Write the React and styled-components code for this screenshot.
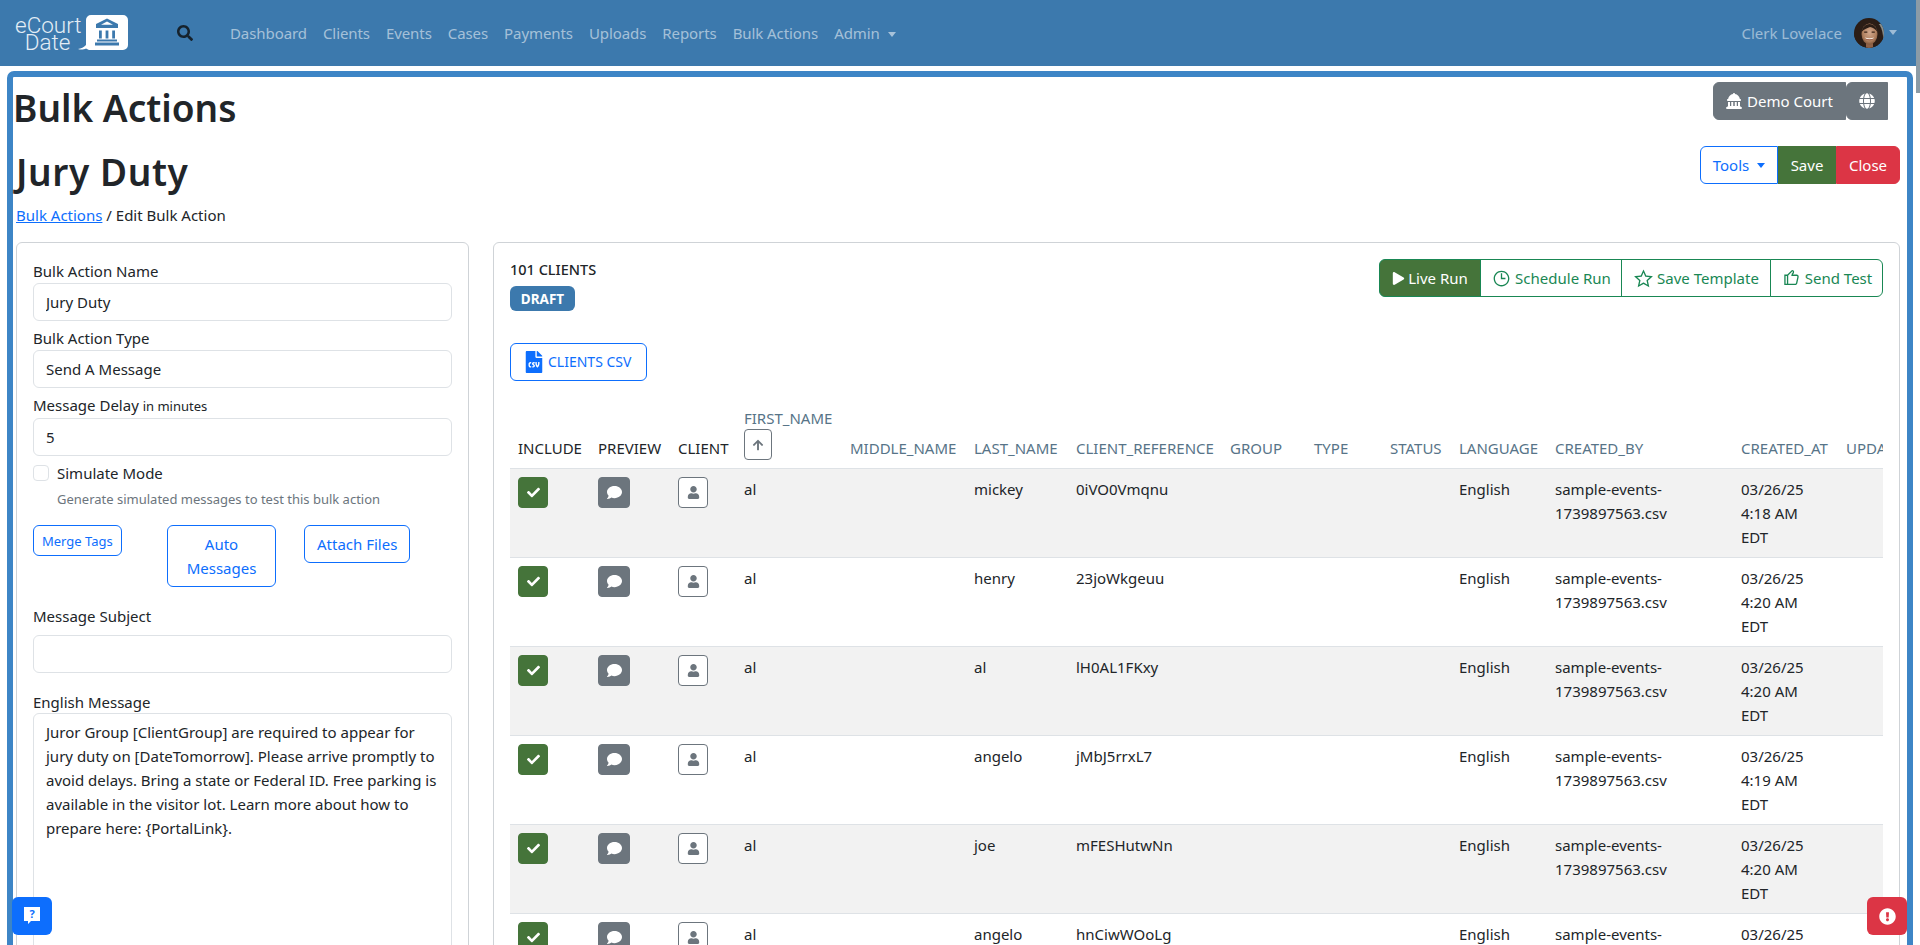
import React from "react";
import styled, { createGlobalStyle, css } from "styled-components";
import {
  FaSearch,
  FaGlobe,
  FaPlay,
  FaFileCsv,
  FaCheck,
  FaComment,
  FaUser,
  FaArrowUp,
  FaExclamationCircle
} from "react-icons/fa";
import { FaLandmarkDome } from "react-icons/fa6";
import { LiaClock, LiaStar, LiaThumbsUp } from "react-icons/lia";

const navBlue = "#3c79ad";
const frameBlue = "#3d85c6";
const green = "#45743a";
const linkBlue = "#0d6efd";
const outlineGreen = "#198754";
const red = "#dc3545";
const gray = "#6c757d";

const GlobalStyle = createGlobalStyle`
  html, body {
    margin: 0;
    height: 100%;
    overflow: hidden;
    background: #fff;
  }
  body {
    font-family: "Noto Sans", "Open Sans", sans-serif;
    font-size: 15px;
    line-height: 24px;
    color: #212529;
  }
  * {
    box-sizing: border-box;
  }
`;

const Viewport = styled.div`
  height: 100vh;
  overflow: hidden;
  padding-right: 4px;
  background: #fff;
`;

const ScrollThumb = styled.div`
  position: fixed;
  top: 0;
  right: 0;
  width: 4px;
  height: 93px;
  background: #8b9ba6;
`;

const Navbar = styled.nav`
  height: 66px;
  background: ${navBlue};
  display: flex;
  align-items: center;
  padding: 0 19px 0 15px;
`;

const LogoLink = styled.a`
  display: flex;
  align-items: center;
`;

const LogoText = styled.div`
  font-family: Roboto, "Liberation Sans", Arial, sans-serif;
  font-weight: 300;
  font-size: 22.5px;
  line-height: 17px;
  color: #e3edf5;
  text-align: center;
  width: 65px;
  margin-top: 1px;
`;

const LogoMark = styled.svg`
  width: 50px;
  height: 36px;
  margin-left: -2px;
`;

const SearchIcon = styled(FaSearch)`
  width: 16px;
  height: 16px;
  color: #16222c;
  margin-left: 49px;
  margin-right: 29px;
`;

const caret = css`
  &::after {
    content: "";
    display: inline-block;
    margin-left: 8px;
    vertical-align: 2px;
    border-top: 5px solid currentColor;
    border-left: 4px solid transparent;
    border-right: 4px solid transparent;
  }
`;

const NavLink = styled.a`
  padding: 0 8px;
  color: rgba(255, 255, 255, 0.55);
  white-space: nowrap;
  letter-spacing: -0.08px;
  ${(p) => p.$caret && caret}
`;

const UserArea = styled.div`
  margin-left: auto;
  display: flex;
  align-items: center;
  color: rgba(255, 255, 255, 0.5);
  ${caret}
  &::after {
    margin-left: 5px;
    margin-bottom: 2px;
  }
`;

const Avatar = styled.svg`
  width: 30px;
  height: 30px;
  margin-left: 12px;
  border-radius: 50%;
`;

const Frame = styled.main`
  margin: 5px 3px 0 7px;
  border: 6px solid ${frameBlue};
  border-radius: 7px;
  padding: 5px 7px 0 0;
`;

const TitleRow = styled.div`
  display: flex;
  justify-content: space-between;
  align-items: flex-start;
  margin-top: ${(p) => p.$top || 0}px;
`;

const PageTitle = styled.h1`
  margin: 2px 0 0 ${(p) => p.$left || 0}px;
  font-size: 37px;
  line-height: 48px;
  font-weight: 600;
  letter-spacing: ${(p) => p.$spread || 0}px;
`;

const Breadcrumb = styled.div`
  margin: 7px 0 0 3px;
`;

const CrumbLink = styled.a`
  color: ${linkBlue};
  text-decoration: underline;
`;

const Group = styled.div`
  display: inline-flex;
  align-items: flex-start;
  margin-right: ${(p) => p.$right || 0}px;
`;

const Button = styled.button`
  font: inherit;
  height: 38px;
  padding: 0 12px;
  border: 1px solid ${linkBlue};
  background: #fff;
  color: ${linkBlue};
  border-radius: 6px;
  white-space: nowrap;
  display: inline-flex;
  align-items: center;
  justify-content: center;

  svg {
    flex: none;
  }
`;

const GroupButton = styled(Button)`
  border-radius: 0;
  &:first-child {
    border-radius: 6px 0 0 6px;
  }
  &:last-child {
    border-radius: 0 6px 6px 0;
  }
`;

const CourtButton = styled(GroupButton)`
  background: ${gray};
  border-color: ${gray};
  color: #fff;
  gap: 5px;
  width: 133px;
  &:last-child {
    width: 42px;
    border-radius: 6px 0 0 6px;
  }
`;

const ToolsButton = styled(GroupButton)`
  width: 78px;
  padding: 0;
  ${caret}
`;

const SolidButton = styled(GroupButton)`
  background: ${(p) => p.$bg};
  border-color: ${(p) => p.$bg};
  color: #fff;
  padding: 0;
  width: ${(p) => p.$w}px;
`;

const RunButton = styled(GroupButton)`
  border-color: ${outlineGreen};
  color: ${outlineGreen};
  gap: 3px;
  padding: 0;
  margin-left: -1px;
  width: ${(p) => p.$w}px;

  &:first-child {
    margin-left: 0;
    background: ${green};
    color: #fff;
  }
`;

const Columns = styled.div`
  display: grid;
  grid-template-columns: 453px 1407px;
  gap: 24px;
  margin: 15px 0 0 3px;
`;

const Card = styled.section`
  border: 1px solid #cfd3d7;
  border-radius: 6px;
  padding: 16px;
  min-width: 0;
`;

const FieldLabel = styled.label`
  display: block;
  margin-top: ${(p) => p.$top || 0}px;
`;

const FieldHint = styled.small`
  font-size: 13px;
`;

const TextInput = styled.input`
  display: block;
  width: 100%;
  height: 38px;
  margin-top: ${(p) => p.$top || 0}px;
  padding: 6px 12px;
  font: inherit;
  color: #212529;
  background: #fff;
  border: 1px solid #dee2e6;
  border-radius: 6px;
  outline: none;
`;

const MessageBox = styled.textarea`
  display: block;
  width: 100%;
  height: 440px;
  margin-top: -1px;
  padding: 6px 12px;
  font: inherit;
  color: #212529;
  background: #fff;
  border: 1px solid #dee2e6;
  border-radius: 6px;
  outline: none;
  resize: none;
`;

const CheckRow = styled.label`
  display: flex;
  align-items: center;
  gap: 8px;
  margin-top: 5px;
`;

const CheckBox = styled.input`
  appearance: none;
  width: 16px;
  height: 16px;
  margin: 0;
  border: 1px solid #dee2e6;
  border-radius: 4px;
  background: #fff;
`;

const HelpText = styled.div`
  font-size: 13px;
  line-height: 21px;
  color: ${gray};
  margin: 4px 0 0 24px;
`;

const TagButtons = styled.div`
  display: grid;
  grid-template-columns: 134px 137px 1fr;
  align-items: start;
  justify-items: start;
  margin-top: 15px;
`;

const SmallButton = styled(Button)`
  height: 31px;
  padding: 0 8px;
  font-size: 13px;
`;

const WrapButton = styled(Button)`
  width: 109px;
  height: 62px;
  white-space: normal;
`;

const CardTop = styled.div`
  display: flex;
  justify-content: space-between;
  align-items: flex-start;
  height: 52px;
`;

const ClientCount = styled.div`
  font-size: 14.5px;
  line-height: 21px;
  font-weight: 500;
  text-transform: uppercase;
`;

const StatusBadge = styled.span`
  display: inline-flex;
  align-items: center;
  justify-content: center;
  width: 65px;
  height: 25px;
  margin-top: 6px;
  border-radius: 6px;
  background: ${navBlue};
  color: #fff;
  font-size: 13.5px;
  font-weight: 700;
`;

const CsvButton = styled(Button)`
  margin-top: 32px;
  width: 137px;
  padding: 0 0 0 12px;
  gap: 3px;
  justify-content: flex-start;
  font-size: 14px;
  text-transform: uppercase;
`;

const TableClip = styled.div`
  margin-top: 17px;
  overflow: hidden;
`;

const ClientTable = styled.table`
  width: 1500px;
  table-layout: fixed;
  border-collapse: collapse;
`;

const HeadCell = styled.th`
  padding: 8px;
  text-align: left;
  vertical-align: bottom;
  font-weight: 400;
  white-space: nowrap;
  color: ${(p) => (p.$plain ? "#212529" : "#577488")};
  border-bottom: 1px solid #dee2e6;
`;

const HeadStack = styled.span`
  display: block;
  margin-bottom: -1px;
`;

const SortButton = styled.button`
  display: flex;
  align-items: center;
  justify-content: center;
  width: 28px;
  height: 31px;
  padding: 0;
  border: 1px solid ${gray};
  border-radius: 4px;
  background: #fff;
  color: ${gray};
`;

const Row = styled.tr`
  &:nth-child(odd) {
    background: #f2f2f2;
  }
`;

const Cell = styled.td`
  padding: 8px;
  vertical-align: top;
  border-bottom: 1px solid #dee2e6;
`;

const TimeCell = styled(Cell)`
  padding-right: 20px;
`;

const RowButton = styled.button`
  display: flex;
  align-items: center;
  justify-content: center;
  width: ${(p) => p.$w}px;
  height: 31px;
  padding: 0;
  border-radius: 4px;
  border: 1px solid ${(p) => (p.$outline ? gray : p.$bg)};
  background: ${(p) => (p.$outline ? "#fff" : p.$bg)};
  color: ${(p) => (p.$outline ? gray : "#fff")};
`;

const FloatButton = styled.button`
  position: fixed;
  bottom: 10px;
  width: 40px;
  height: 38px;
  padding: 0;
  border: 0;
  border-radius: 6px;
  display: flex;
  align-items: center;
  justify-content: center;
  color: #fff;
  background: ${(p) => p.$bg};
  ${(p) => (p.$side === "left" ? "left: 12px;" : "right: 13px;")}
`;

const ColWidth = styled.col`
  width: ${(p) => p.$w}px;
`;

const columns = [
  { key: "INCLUDE", w: 80, plain: true },
  { key: "PREVIEW", w: 80, plain: true },
  { key: "CLIENT", w: 66, plain: true },
  { key: "FIRST_NAME", w: 106, sort: true },
  { key: "MIDDLE_NAME", w: 124 },
  { key: "LAST_NAME", w: 102 },
  { key: "CLIENT_REFERENCE", w: 154 },
  { key: "GROUP", w: 84 },
  { key: "TYPE", w: 76 },
  { key: "STATUS", w: 69 },
  { key: "LANGUAGE", w: 96 },
  { key: "CREATED_BY", w: 186 },
  { key: "CREATED_AT", w: 105 },
  { key: "UPDATED_AT", w: 172 }
];

const clients = [
  { last: "mickey", ref: "0iVO0Vmqnu", time: "4:18" },
  { last: "henry", ref: "23joWkgeuu", time: "4:20" },
  { last: "al", ref: "lH0AL1FKxy", time: "4:20" },
  { last: "angelo", ref: "jMbJ5rrxL7", time: "4:19" },
  { last: "joe", ref: "mFESHutwNn", time: "4:20" },
  { last: "angelo", ref: "hnCiwWOoLg", time: "4:20" }
];

const LogoIcon = () => (
  <LogoMark viewBox="0 0 50 36">
    <path
      d="M13 0h32a5 5 0 0 1 5 5v25a5 5 0 0 1-5 5H11l-3-1.500C6 34.500 3 35 0 34c3-.5 6-1.500 8-4V5a5 5 0 0 1 5-5z"
      fill="#fff"
    />
    <g fill={navBlue}>
      <path d="M29 3.500 40 9v4H18V9zM29 6.500 23 9.800h12z" fillRule="evenodd" />
      <rect x="21" y="15.500" width="2.800" height="8" />
      <rect x="27.600" y="15.500" width="2.800" height="8" />
      <rect x="34.200" y="15.500" width="2.800" height="8" />
      <rect x="19" y="24.500" width="20" height="2" />
      <rect x="17" y="27.500" width="24" height="3" />
    </g>
  </LogoMark>
);

const UserPhoto = () => (
  <Avatar viewBox="0 0 30 30">
    <defs>
      <radialGradient id="skin" cx="50%" cy="42%" r="60%">
        <stop offset="0%" stopColor="#d2a88d" />
        <stop offset="70%" stopColor="#b0805f" />
        <stop offset="100%" stopColor="#7a5238" />
      </radialGradient>
    </defs>
    <rect width="30" height="30" fill="#2b1d16" />
    <rect x="22" y="6" width="8" height="14" fill="#8a8f8c" />
    <path d="M0 30V18C1 6 9 1 15 1s13 5 14 17l1 12z" fill="#2b1d16" />
    <rect x="12" y="24" width="7" height="6" fill="#8f6248" />
    <ellipse cx="15.500" cy="16" rx="8" ry="10.500" fill="url(#skin)" />
    <path d="M7.500 14c1-5 4-8 8-8s7 3 8 8c-2-3-5-4.500-7.500-5-2 1-6 2-8.500 5z" fill="#2b1d16" />
    <rect x="10" y="13.500" width="3.500" height="1.200" rx=".6" fill="#3b2418" />
    <rect x="17.500" y="13.500" width="3.500" height="1.200" rx=".6" fill="#3b2418" />
    <path d="M11 19.500c2.500 1 6.500 1 9 0-1 2.800-8 2.800-9 0z" fill="#f6ece4" />
    <path d="M10.800 19.300c1 4 8.400 4 9.400 0-1 3-8.400 3-9.400 0z" fill="#8a4a3a" />
  </Avatar>
);

const HelpBubble = () => (
  <svg width="18" height="20" viewBox="0 0 18 20">
    <path d="M1 1h16v14H8l-3 3v-3H1z" fill="#fff" />
    <text
      x="9"
      y="12"
      textAnchor="middle"
      fontSize="11"
      fontWeight="700"
      fontFamily="Noto Sans, sans-serif"
      fill={linkBlue}
    >
      ?
    </text>
  </svg>
);

const messageText =
  "Juror Group [ClientGroup] are required to appear for jury duty on [DateTomorrow]. Please arrive promptly to avoid delays. Bring a state or Federal ID. Free parking is available in the visitor lot. Learn more about how to prepare here: {PortalLink}.";

const navItems = [
  "Dashboard",
  "Clients",
  "Events",
  "Cases",
  "Payments",
  "Uploads",
  "Reports",
  "Bulk Actions"
];

const App = () => (
  <Viewport>
    <GlobalStyle />
    <Navbar>
      <LogoLink>
        <LogoText>
          eCourt
          <br />
          Date
        </LogoText>
        <LogoIcon />
      </LogoLink>
      <SearchIcon />
      {navItems.map((item) => (
        <NavLink key={item}>{item}</NavLink>
      ))}
      <NavLink $caret>Admin</NavLink>
      <UserArea>
        Clerk Lovelace
        <UserPhoto />
      </UserArea>
    </Navbar>

    <Frame>
      <TitleRow>
        <PageTitle>Bulk Actions</PageTitle>
        <Group $right={12}>
          <CourtButton>
            <FaLandmarkDome size={16} />
            Demo Court
          </CourtButton>
          <CourtButton>
            <FaGlobe size={16} />
          </CourtButton>
        </Group>
      </TitleRow>

      <TitleRow $top={14}>
        <PageTitle $left={3} $spread={0.6}>
          Jury Duty
        </PageTitle>
        <Group>
          <ToolsButton>Tools</ToolsButton>
          <SolidButton $bg={green} $w={58}>
            Save
          </SolidButton>
          <SolidButton $bg={red} $w={64}>
            Close
          </SolidButton>
        </Group>
      </TitleRow>

      <Breadcrumb>
        <CrumbLink>Bulk Actions</CrumbLink> / Edit Bulk Action
      </Breadcrumb>

      <Columns>
        <Card>
          <FieldLabel>Bulk Action Name</FieldLabel>
          <TextInput readOnly value="Jury Duty" />
          <FieldLabel $top={5}>Bulk Action Type</FieldLabel>
          <TextInput readOnly value="Send A Message" />
          <FieldLabel $top={5}>
            Message Delay <FieldHint>in minutes</FieldHint>
          </FieldLabel>
          <TextInput readOnly value="5" />
          <CheckRow>
            <CheckBox type="checkbox" />
            Simulate Mode
          </CheckRow>
          <HelpText>Generate simulated messages to test this bulk action</HelpText>
          <TagButtons>
            <SmallButton>Merge Tags</SmallButton>
            <WrapButton>Auto Messages</WrapButton>
            <Button>Attach Files</Button>
          </TagButtons>
          <FieldLabel $top={17}>Message Subject</FieldLabel>
          <TextInput readOnly value="" $top={7} />
          <FieldLabel $top={17}>English Message</FieldLabel>
          <MessageBox readOnly value={messageText} />
        </Card>

        <Card>
          <CardTop>
            <div>
              <ClientCount>101 Clients</ClientCount>
              <StatusBadge>DRAFT</StatusBadge>
            </div>
            <Group>
              <RunButton $w={102}>
                <FaPlay size={13} />
                Live Run
              </RunButton>
              <RunButton $w={142}>
                <LiaClock size={21} />
                Schedule Run
              </RunButton>
              <RunButton $w={150}>
                <LiaStar size={21} />
                Save Template
              </RunButton>
              <RunButton $w={113}>
                <LiaThumbsUp size={21} />
                Send Test
              </RunButton>
            </Group>
          </CardTop>

          <CsvButton>
            <FaFileCsv size={22} />
            Clients CSV
          </CsvButton>

          <TableClip>
            <ClientTable>
              <colgroup>
                {columns.map((col) => (
                  <ColWidth key={col.key} $w={col.w} />
                ))}
              </colgroup>
              <thead>
                <tr>
                  {columns.map((col) => (
                    <HeadCell key={col.key} $plain={col.plain}>
                      {col.sort ? (
                        <>
                          <HeadStack>{col.key}</HeadStack>
                          <SortButton>
                            <FaArrowUp size={12} />
                          </SortButton>
                        </>
                      ) : (
                        col.key
                      )}
                    </HeadCell>
                  ))}
                </tr>
              </thead>
              <tbody>
                {clients.map((client) => (
                  <Row key={client.ref}>
                    <Cell>
                      <RowButton $w={30} $bg={green}>
                        <FaCheck size={13} />
                      </RowButton>
                    </Cell>
                    <Cell>
                      <RowButton $w={32} $bg={gray}>
                        <FaComment size={15} />
                      </RowButton>
                    </Cell>
                    <Cell>
                      <RowButton $w={30} $outline>
                        <FaUser size={13} />
                      </RowButton>
                    </Cell>
                    <Cell>al</Cell>
                    <Cell />
                    <Cell>{client.last}</Cell>
                    <Cell>{client.ref}</Cell>
                    <Cell />
                    <Cell />
                    <Cell />
                    <Cell>English</Cell>
                    <Cell>sample-events-1739897563.csv</Cell>
                    <TimeCell>03/26/25 {client.time} AM EDT</TimeCell>
                    <Cell />
                  </Row>
                ))}
              </tbody>
            </ClientTable>
          </TableClip>
        </Card>
      </Columns>
    </Frame>

    <ScrollThumb />
    <FloatButton $side="left" $bg={linkBlue}>
      <HelpBubble />
    </FloatButton>
    <FloatButton $side="right" $bg={red}>
      <FaExclamationCircle size={17} />
    </FloatButton>
  </Viewport>
);

export default App;
